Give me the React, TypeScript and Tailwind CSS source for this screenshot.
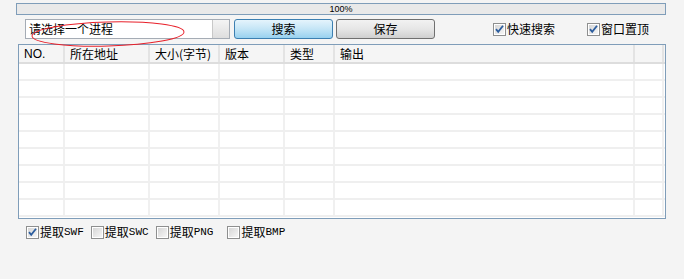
import React from "react";

const cjk = { fontFamily: '"SimSun","Noto Sans CJK SC",sans-serif' };

function Check({ checked }: { checked: boolean }) {
  return (
    <svg width="13" height="13" viewBox="0 0 13 13" className="shrink-0">
      <defs>
        <linearGradient id="cbg" x1="0" y1="0" x2="1" y2="1">
          <stop offset="0" stopColor="#d6d6d6" />
          <stop offset="1" stopColor="#f6f6f6" />
        </linearGradient>
      </defs>
      <rect x="0.5" y="0.5" width="12" height="12" fill="#fff" stroke="#8e8f8f" />
      <rect x="2" y="2" width="9" height="9" fill="url(#cbg)" />
      {checked && (
        <path d="M3 6.2 L5.2 8.8 L10 2.8" fill="none" stroke="#2c5d9e" strokeWidth="1.8" />
      )}
    </svg>
  );
}

const cols = [
  { w: "w-[46px]", t: "NO.", latin: true },
  { w: "w-[85px]", t: "所在地址" },
  { w: "w-[70px]", t: "大小(字节)" },
  { w: "w-[65px]", t: "版本" },
  { w: "w-[50px]", t: "类型" },
  { w: "w-[300px]", t: "输出" },
  { w: "w-[29px]", t: "" },
];

export default function App() {
  const rows = Array.from({ length: 9 });
  return (
    <div className="relative w-[684px] h-[279px] bg-[#f4f4f4] text-black overflow-hidden">
      {/* progress bar */}
      <div className="ml-[16px] mt-[3px] w-[650px] h-[12px] border border-[#7f9db9] bg-[#e9e9e9] flex items-center justify-center">
        <span className="text-[9px] leading-none" style={{ fontFamily: '"Liberation Sans",sans-serif' }}>100%</span>
      </div>

      {/* controls row */}
      <div className="flex items-center mt-[4px] h-[20px]">
        <div className="ml-[25px] w-[205px] h-[20px] flex border border-[#a5acb5] bg-white">
          <div className="flex-1 flex items-center pl-[3px] text-[12px] leading-none" style={cjk}>
            请选择一个进程
          </div>
          <div className="w-[17px] h-full border-l border-[#c8c8c8] bg-gradient-to-b from-[#f4f4f4] to-[#dedede]" />
        </div>
        <button
          className="ml-[4px] w-[99px] h-[20px] rounded-[3px] border border-[#3c7fb1] bg-gradient-to-b from-[#e5f4fc] via-[#c4e5f6] to-[#98d1ef] text-[12px] leading-none"
          style={cjk}
        >
          搜索
        </button>
        <button
          className="ml-[3px] w-[99px] h-[20px] rounded-[3px] border border-[#707070] bg-gradient-to-b from-[#f2f2f2] via-[#e6e6e6] to-[#d0d0d0] text-[12px] leading-none"
          style={cjk}
        >
          保存
        </button>
        <div className="ml-[58px] flex items-center gap-[1px] text-[12px] leading-none" style={cjk}>
          <Check checked />
          <span>快速搜索</span>
        </div>
        <div className="ml-[32px] flex items-center gap-[1px] text-[12px] leading-none" style={cjk}>
          <Check checked />
          <span>窗口置顶</span>
        </div>
      </div>

      {/* table */}
      <div className="ml-[18px] mt-[5px] w-[648px] h-[175px] border border-[#7f9db9] bg-white overflow-hidden">
        <div className="flex h-[19px] bg-[#f5f5f5] border-b-2 border-[#dddddd]">
          {cols.map((c, i) => (
            <div
              key={i}
              className={`${c.w} shrink-0 h-full flex items-center pl-[5px] border-r-2 border-[#e3e3e3] text-[12px] leading-none`}
              style={c.latin ? { fontFamily: '"Liberation Sans",sans-serif' } : cjk}
            >
              {c.t}
            </div>
          ))}
        </div>
        {rows.map((_, r) => (
          <div key={r} className="flex h-[17px] border-b-2 border-[#efefef]">
            {cols.map((c, i) => (
              <div key={i} className={`${c.w} shrink-0 h-full border-r-2 border-[#f0f0f0]`} />
            ))}
          </div>
        ))}
      </div>

      {/* bottom checkboxes */}
      <div className="flex items-center mt-[6px] ml-[26px] h-[14px] text-[12px] leading-none" style={cjk}>
        <Check checked />
        <span className="ml-[1px]">提取</span>
        <span className="text-[11px]" style={{ fontFamily: '"Liberation Mono",monospace' }}>SWF</span>
        <div className="ml-[7px]"><Check checked={false} /></div>
        <span className="ml-[1px]">提取</span>
        <span className="text-[11px]" style={{ fontFamily: '"Liberation Mono",monospace' }}>SWC</span>
        <div className="ml-[7px]"><Check checked={false} /></div>
        <span className="ml-[1px]">提取</span>
        <span className="text-[11px]" style={{ fontFamily: '"Liberation Mono",monospace' }}>PNG</span>
        <div className="ml-[14px]"><Check checked={false} /></div>
        <span className="ml-[1px]">提取</span>
        <span className="text-[11px]" style={{ fontFamily: '"Liberation Mono",monospace' }}>BMP</span>
      </div>

      {/* red annotation ellipse */}
      <svg className="absolute left-0 top-0 pointer-events-none" width="684" height="279">
        <ellipse cx="108" cy="34" rx="76" ry="12" fill="none" stroke="#e8202a" strokeWidth="1" transform="rotate(-1.5 108 34)" />
      </svg>
    </div>
  );
}
